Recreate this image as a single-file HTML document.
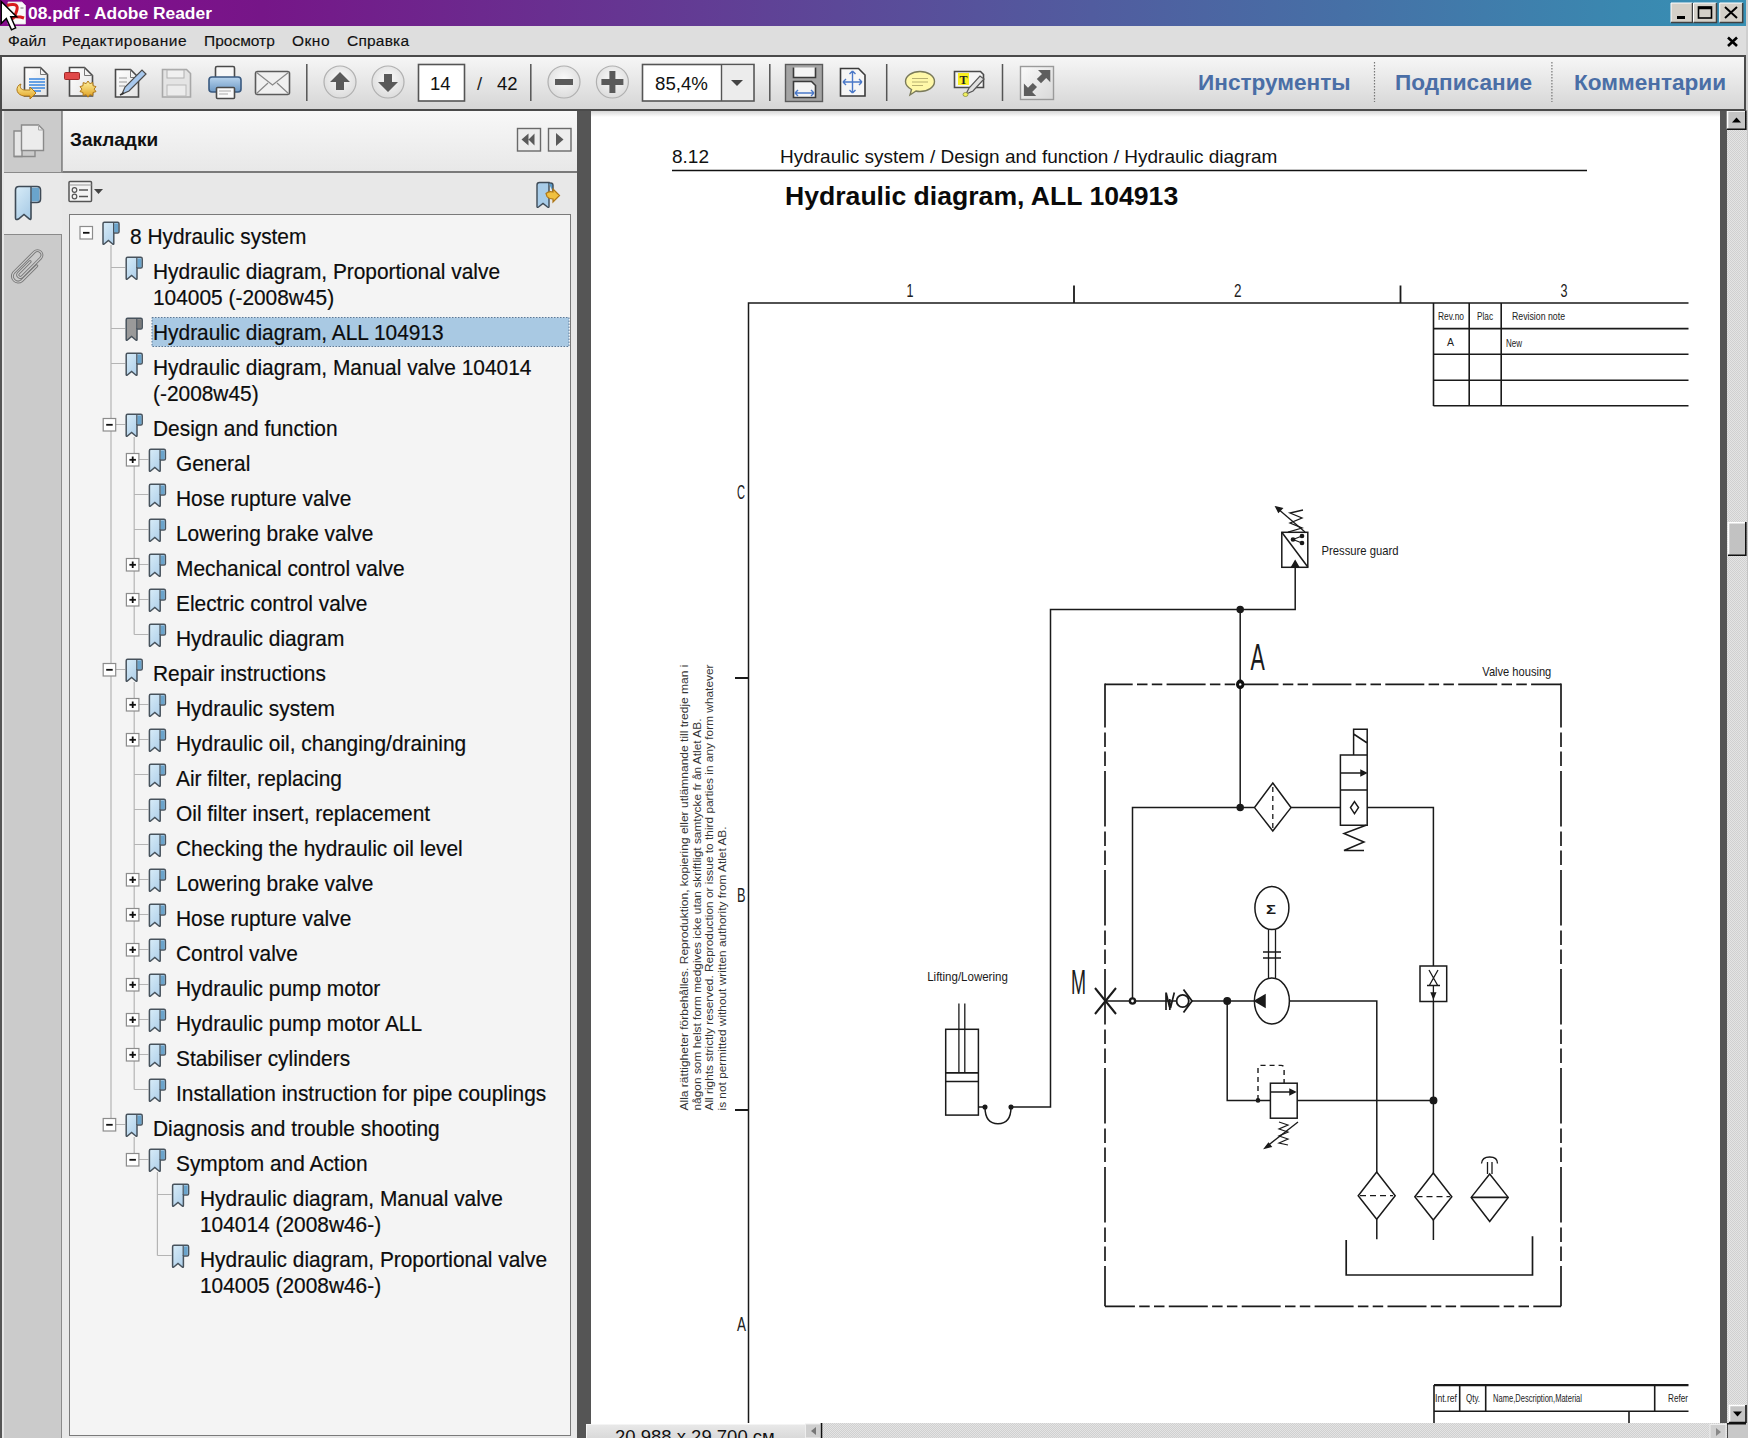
<!DOCTYPE html>
<html><head><meta charset="utf-8">
<style>
*{margin:0;padding:0;box-sizing:border-box}
html,body{width:1748px;height:1438px;overflow:hidden;background:#fff;font-family:"Liberation Sans",sans-serif}
.a{position:absolute}
#title{left:0;top:0;width:1746px;height:26px;background:linear-gradient(90deg,#880a8e 0%,#761688 15%,#5c4898 48%,#4670a6 77%,#3a88b0 93%,#3890b4 100%)}
#title .t{left:28px;top:2px;color:#fff;font-weight:bold;font-size:17.4px;line-height:22px;white-space:nowrap}
#menu{left:0;top:26px;width:1748px;height:29px;background:#dedede}
#menu span{position:absolute;top:6px;font-size:15.5px;line-height:18px;color:#111;white-space:nowrap;-webkit-text-stroke:0.15px #111}
#tb{z-index:3;left:0;top:55px;width:1746px;border-right:2px solid #4a4a4a;height:56px;background:linear-gradient(#f6f6f6,#e6e6e6 50%,#d6d6d6);border-top:2px solid #4a4a4a;border-bottom:2px solid #4a4a4a;border-left:2px solid #4a4a4a}
#strip{left:0;top:110px;width:62px;height:1328px;background:#cbcbcb;border-left:2px solid #555}
#panel{left:62px;top:110px;width:515px;height:1328px;background:#e8e8e8}
#split{left:577px;top:110px;width:14px;height:1328px;background:#555}
#doc{left:591px;top:110px;width:1129px;height:1310px;background:#fff}
#vs{left:1720px;top:110px;width:28px;height:1328px;background:#d9d9d9}
.tbt{white-space:nowrap;line-height:22px;z-index:5}
.tbb{font-size:22.6px;font-weight:bold;color:#4a6ea6}
.hatch{background-color:#e4e4e4;background-image:linear-gradient(45deg,#d0d0d0 25%,transparent 25%,transparent 75%,#d0d0d0 75%),linear-gradient(45deg,#d0d0d0 25%,transparent 25%,transparent 75%,#d0d0d0 75%);background-size:2px 2px;background-position:0 0,1px 1px}
.tree{font-size:21.8px;color:#0c0c0c;white-space:nowrap;line-height:26px;-webkit-text-stroke:0.2px #0c0c0c;transform:scaleX(0.958);transform-origin:0 0}
</style></head><body>
<div id="title" class="a"><div class="a t">08.pdf - Adobe Reader</div></div>
<div id="menu" class="a">
<span style="left:8px">Файл</span><span style="left:62px;letter-spacing:0.5px">Редактирование</span><span style="left:204px">Просмотр</span><span style="left:292px;letter-spacing:0.5px">Окно</span><span style="left:347px;letter-spacing:0.2px">Справка</span>
</div>
<div id="tb" class="a"></div>
<svg class="a" style="left:0;top:0;z-index:4" width="1748" height="112" viewBox="0 0 1748 112">
<defs>
<linearGradient id="gPage" x1="0" y1="0" x2="1" y2="1"><stop offset="0" stop-color="#ffffff"/><stop offset="1" stop-color="#e4e4e4"/></linearGradient>
<linearGradient id="gGold" x1="0" y1="0" x2="0" y2="1"><stop offset="0" stop-color="#fff2a0"/><stop offset="1" stop-color="#e0a020"/></linearGradient>
<linearGradient id="gBlue" x1="0" y1="0" x2="0" y2="1"><stop offset="0" stop-color="#b8d4ee"/><stop offset="1" stop-color="#6c98c4"/></linearGradient>
<radialGradient id="gCirc" cx="0.5" cy="0.4" r="0.6"><stop offset="0" stop-color="#fafafa"/><stop offset="1" stop-color="#dcdcdc"/></radialGradient>
</defs>
<!-- icon1 open -->
<path d="M24.5 67.5h16l7 7v21.5h-23z" fill="url(#gPage)" stroke="#4a4a4a" stroke-width="1.6"/>
<path d="M40.5 67.5v7h7" fill="none" stroke="#777" stroke-width="1"/>
<g stroke="#3a86e0" stroke-width="1.4"><path d="M29 79h16M29 82h16M29 85h16M29 88h16M29 91h12"/></g>
<path d="M19 85c-4 4-2 10 5 11h6v3l6-6-6-6v3h-5c-4 0-6-3-4-6z" fill="url(#gGold)" stroke="#b07818" stroke-width="1"/>
<!-- icon2 create -->
<path d="M69.5 67.5h15l8 8v20.5h-23z" fill="url(#gPage)" stroke="#4a4a4a" stroke-width="1.6"/>
<path d="M84.5 67.5v8h8" fill="none" stroke="#777" stroke-width="1"/>
<rect x="64.5" y="72.5" width="15" height="7" rx="1" fill="#e04848" stroke="#a02828" stroke-width="1"/>
<path d="M88 81l1.8 2.6 3-1 .2 3.1 3 .9-1.9 2.5 1.9 2.5-3 .9-.2 3.1-3-1-1.8 2.6-1.8-2.6-3 1-.2-3.1-3-.9 1.9-2.5-1.9-2.5 3-.9.2-3.1 3 1z" fill="url(#gGold)" stroke="#b07818" stroke-width="1"/>
<!-- icon3 edit -->
<path d="M115.5 69.5h15l8 8v19.5h-23z" fill="url(#gPage)" stroke="#4a4a4a" stroke-width="1.6"/>
<path d="M130.5 69.5v8h8" fill="none" stroke="#777" stroke-width="1"/>
<g stroke="#999" stroke-width="1"><path d="M119 78h8M119 82h8M119 86h6"/></g>
<path d="M122 94l3-7 17-17 4 4-17 17z" fill="#a8c8ec" stroke="#4a4a4a" stroke-width="1.2"/>
<path d="M120 95l4-2" stroke="#333" stroke-width="1.4"/>
<!-- icon4 save disabled -->
<path d="M162.5 69.5h24l4 4v23.5h-28z" fill="#e4e4e4" stroke="#a8a8a8" stroke-width="1.6"/>
<rect x="167" y="70" width="17" height="8" fill="#f0f0f0" stroke="#b0b0b0" stroke-width="1"/>
<rect x="167" y="85" width="19" height="11" fill="#ececec" stroke="#b8b8b8" stroke-width="1"/>
<!-- icon5 print -->
<rect x="215.5" y="66.5" width="19" height="13" rx="1.5" fill="#f8f8f8" stroke="#4a4a4a" stroke-width="1.6"/>
<path d="M212 77h26c2 0 3 1 3 3v9c0 2-1 3-3 3h-26c-2 0-3-1-3-3v-9c0-2 1-3 3-3z" fill="url(#gBlue)" stroke="#3a5a80" stroke-width="1.6"/>
<rect x="216.5" y="87.5" width="18" height="11" rx="1" fill="#fafafa" stroke="#4a4a4a" stroke-width="1.6"/>
<path d="M219 91h12M219 94h9" stroke="#aaa" stroke-width="1"/>
<!-- icon6 mail -->
<rect x="255.5" y="71.5" width="34" height="23" rx="2" fill="#f0f0f0" stroke="#5a5a5a" stroke-width="1.6"/>
<path d="M256 72l16.5 13 16.5-13M256 94l12-11M289 94l-12-11" fill="none" stroke="#888" stroke-width="1.2"/>
<!-- separators -->
<g stroke="#555" stroke-width="1.5"><path d="M306.8 64v37M530.8 64v37M769.8 64v37M886.7 64v37M1002.5 64v37"/></g>
<!-- nav circles -->
<circle cx="340" cy="82" r="16" fill="url(#gCirc)" stroke="#b0b0b0" stroke-width="1.2"/>
<path d="M340 72l-10 10h6v8h8v-8h6z" fill="#5a5a5a"/>
<circle cx="388" cy="82" r="16" fill="url(#gCirc)" stroke="#b0b0b0" stroke-width="1.2"/>
<path d="M388 92l-10-10h6v-8h8v8h6z" fill="#5a5a5a"/>
<rect x="418.5" y="64.5" width="46" height="36.5" fill="#fff" stroke="#555" stroke-width="1.6"/>
<circle cx="564" cy="82" r="16" fill="url(#gCirc)" stroke="#b0b0b0" stroke-width="1.2"/>
<rect x="555" y="79" width="18" height="6" fill="#5a5a5a"/>
<circle cx="612.4" cy="82" r="16" fill="url(#gCirc)" stroke="#b0b0b0" stroke-width="1.2"/>
<path d="M609.4 71h6v8h8v6h-8v8h-6v-8h-8v-6h8z" fill="#5a5a5a"/>
<rect x="642.5" y="64.5" width="111.5" height="36.5" fill="#fff" stroke="#555" stroke-width="1.6"/>
<rect x="722" y="65.5" width="31" height="34.5" fill="#ececec"/>
<path d="M721.5 65v36" stroke="#555" stroke-width="1.4"/>
<path d="M731 80h12l-6 6z" fill="#444"/>
<!-- fit width pressed -->
<rect x="785.5" y="64.5" width="37" height="37" fill="#a4a4a4" stroke="#5a5a5a" stroke-width="1.4"/>
<path d="M793.5 67.5v10h22v-10" fill="#f4f4f4" stroke="#3a3a3a" stroke-width="1.6"/>
<path d="M793.5 97.5v-16h18l4 4v12z" fill="#f4f4f4" stroke="#3a3a3a" stroke-width="1.6"/>
<path d="M795 93h19M795 93l3-3M795 93l3 3M814 93l-3-3M814 93l-3 3" stroke="#4a78c8" stroke-width="1.4" fill="none"/>
<!-- fit page -->
<path d="M840.5 68.5h18l6.5 6.5v21h-24.5z" fill="#f6f6f6" stroke="#3a3a3a" stroke-width="1.6"/>
<path d="M852.5 71v22M843 82h19M852.5 71l-3 3M852.5 71l3 3M852.5 93l-3-3M852.5 93l3-3M843 82l3-3M843 82l3 3M862 82l-3-3M862 82l-3 3" stroke="#4a78c8" stroke-width="1.4" fill="none"/>
<!-- comment -->
<path d="M920 71.5c8 0 14.5 4.5 14.5 10s-6.5 10-14.5 10c-1.5 0-3-.2-4-.5l-6 4 1.5-5.5c-3.5-2-6-4.8-6-8 0-5.5 6.5-10 14.5-10z" fill="#fff8a8" stroke="#7a7a5a" stroke-width="1.4"/>
<path d="M912 78.5h16M912 82h16M912 85.5h11" stroke="#b8b070" stroke-width="1.2"/>
<!-- highlight T -->
<path d="M954.5 71.5h26l3 3v13h-29z" fill="#f4f4f4" stroke="#4a4a4a" stroke-width="1.6"/>
<rect x="958" y="73" width="11" height="12" fill="#f8f020"/>
<text x="963.5" y="83.5" font-family="Liberation Serif" font-weight="bold" font-size="12" text-anchor="middle" fill="#222">T</text>
<path d="M966 94l3-6 11-12 4 3-11 12z" fill="#e0e0e0" stroke="#555" stroke-width="1.2"/>
<ellipse cx="965.5" cy="94.5" rx="2.5" ry="2" fill="#f0f060" stroke="#8a8a40" stroke-width="0.8"/>
<!-- fullscreen -->
<defs><linearGradient id="gFs" x1="0" y1="0" x2="1" y2="1"><stop offset="0" stop-color="#fafafa"/><stop offset="1" stop-color="#d8d8d8"/></linearGradient></defs>
<rect x="1020.5" y="66.5" width="33" height="33" fill="url(#gFs)" stroke="#9a9a9a" stroke-width="1.4"/>
<path d="M1050.3 69.9V82.2L1046.2 78.1 1041 83.3 1036.8 79.1 1042 73.9 1038 69.9Z" fill="#5e5e5e"/>
<path d="M1023.9 95.9V83.6L1028 87.7 1032.8 82.9 1037 87.1 1032.2 91.9 1036.2 95.9Z" fill="#5e5e5e"/>
<!-- dotted separators right -->
<g stroke="#777" stroke-width="1.2" stroke-dasharray="1.5 1.5"><path d="M1374.5 62v40M1551.9 62v40"/></g>
<!-- window buttons -->
<g>
<rect x="1671" y="3" width="21.5" height="19.5" fill="#d4d0c8"/>
<path d="M1671 22.5v-19.5h21.5" stroke="#fff" stroke-width="1" fill="none"/>
<path d="M1671 22.5h21.5v-19.5" stroke="#404040" stroke-width="1.5" fill="none"/>
<rect x="1677" y="16" width="8" height="3" fill="#000"/>
<rect x="1693.5" y="3" width="23" height="19.5" fill="#d4d0c8"/>
<path d="M1693.5 22.5v-19.5h23" stroke="#fff" stroke-width="1" fill="none"/>
<path d="M1693.5 22.5h23v-19.5" stroke="#404040" stroke-width="1.5" fill="none"/>
<rect x="1698.5" y="7" width="13" height="11" fill="none" stroke="#000" stroke-width="1.6"/>
<path d="M1698.5 8h13" stroke="#000" stroke-width="2.5"/>
<rect x="1719.7" y="3" width="23" height="19.5" fill="#d4d0c8"/>
<path d="M1719.7 22.5v-19.5h23" stroke="#fff" stroke-width="1" fill="none"/>
<path d="M1719.7 22.5h23v-19.5" stroke="#404040" stroke-width="1.5" fill="none"/>
<path d="M1725 7l12 11M1737 7l-12 11" stroke="#000" stroke-width="2"/>
</g>
<path d="M1728 37.5l9 8.5M1737 37.5l-9 8.5" stroke="#000" stroke-width="2.6"/>
</svg>
<div class="a tbt" style="left:430px;top:73.3px;font-size:18.5px;color:#111">14</div>
<div class="a tbt" style="left:477px;top:73.3px;font-size:18.5px;color:#222">/</div>
<div class="a tbt" style="left:497px;top:73.3px;font-size:18.5px;color:#111">42</div>
<div class="a tbt" style="left:655px;top:73.3px;font-size:18.7px;color:#111">85,4%</div>
<div class="a tbt tbb" style="left:1198px;top:71.5px">Инструменты</div>
<div class="a tbt tbb" style="left:1395px;top:71.5px">Подписание</div>
<div class="a tbt tbb" style="left:1574px;top:71.5px">Комментарии</div>

<div id="strip" class="a"></div>
<div class="a" style="left:2px;top:172px;width:62px;height:63px;background:#e9e9e9;border-top:1.5px solid #8a8a8a;border-bottom:1.5px solid #8a8a8a"></div>
<div id="panel" class="a"></div>
<div class="a" style="left:61px;top:110px;width:1.3px;height:62px;background:#8a8a8a"></div><div class="a" style="left:61px;top:235px;width:1.3px;height:1203px;background:#8a8a8a"></div><div class="a" style="left:2px;top:110px;width:1.5px;height:1328px;background:#e6e6e6"></div>
<div class="a" style="left:62px;top:110px;width:515px;height:63.4px;background:linear-gradient(#f8f8f8,#e8e8e8);border-left:1.5px solid #9a9a9a;border-bottom:2px solid #7a7a7a"></div>
<div class="a" style="left:70px;top:129px;font-size:19px;font-weight:bold;color:#111;line-height:22px">Закладки</div>
<div class="a" style="left:69px;top:214px;width:502px;height:1222px;background:#f4f4f4;border:1.5px solid #7a7a7a"></div>
<svg class="a" style="left:0;top:100px" width="600" height="140" viewBox="0 100 600 140">
<!-- pages icon -->
<path d="M14 131h8v25.5h-8z" fill="#e6e6e6" stroke="#8a8a8a" stroke-width="1.4"/><path d="M14 156.5h21v-6" fill="none" stroke="#8a8a8a" stroke-width="1.4"/>
<path d="M21.5 125h17l5 5v20.5h-22z" fill="#ececec" stroke="#8a8a8a" stroke-width="1.4"/><path d="M38.5 125v5h5" fill="none" stroke="#aaa" stroke-width="1"/>
<!-- bookmark tab icon -->
<path d="M15.5 190Q15.5 186.5 19 186.5H37Q40.5 186.5 40.5 190V199Q40.5 202.5 37 202.5H31V218Q31 220 29.5 219L24 214.5 18.5 219Q15.5 220.5 15.5 218Z" fill="url(#bmB2)" stroke="#3e4a56" stroke-width="1.6"/>
<rect x="31.5" y="188" width="7.5" height="13" fill="#6aa4cc"/>
<path d="M31 187v15.5" stroke="#3e4a56" stroke-width="1.4"/>
<!-- buttons -->
<rect x="517.5" y="128.5" width="23" height="22.5" fill="#ededed" stroke="#6a6a6a" stroke-width="1.4"/>
<path d="M521.5 139.5l7-6v12zM528.5 139.5l6-6v12z" fill="#5a5a5a"/>
<rect x="548.5" y="128.5" width="22.5" height="22.5" fill="#ededed" stroke="#6a6a6a" stroke-width="1.4"/>
<path d="M556 133l7.5 6.5-7.5 6.5z" fill="#5a5a5a"/>
<!-- options icon -->
<rect x="69" y="181.5" width="22.5" height="20" rx="1" fill="#f4f4f4" stroke="#555" stroke-width="1.5"/>
<path d="M69.5 185h22" stroke="#999" stroke-width="1"/>
<circle cx="74.5" cy="190" r="2.3" fill="none" stroke="#555" stroke-width="1.2"/>
<circle cx="74.5" cy="196.5" r="2.3" fill="none" stroke="#555" stroke-width="1.2"/>
<path d="M79 190h9M79 196.5h9" stroke="#555" stroke-width="1.6"/>
<path d="M94 189h9l-4.5 5z" fill="#444"/>
<!-- bookmark-arrow icon -->
<path d="M537 185Q537 182.5 539.5 182.5H549V206.5Q549 208 547.5 207L543 203.5 538.5 207Q537 208 537 206.5Z" fill="#a8cce8" stroke="#3e4a56" stroke-width="1.4"/>
<path d="M548.5 183Q553 182.5 553 185V192" fill="#5a9ac8" stroke="#3e4a56" stroke-width="1.4"/>
<path d="M546 193.5c2-2 5-2 7-1.5v-3l6.5 6.5-6.5 6.5v-3c-2 0-4.5-.5-6-2.5z" fill="#f0c040" stroke="#b07818" stroke-width="1.2"/>
<defs><linearGradient id="bmB2" x1="0" y1="0" x2="1" y2="1"><stop offset="0" stop-color="#d8ecf8"/><stop offset="1" stop-color="#98c0e0"/></linearGradient></defs>
</svg>
<svg class="a" style="left:0;top:235px" width="62" height="70" viewBox="0 235 62 70">
<g transform="translate(27.8,265.8) rotate(-45) scale(0.9)" fill="none">
<path d="M5 -1.5H-13A2.8 2.8 0 0 0 -13 4.1H16A4.9 4.9 0 0 0 16 -5.7H-16.5A6.4 6.4 0 0 0 -16.5 7H7" stroke="#7c7c7c" stroke-width="3.4" stroke-linecap="round"/>
<path d="M5 -1.5H-13A2.8 2.8 0 0 0 -13 4.1H16A4.9 4.9 0 0 0 16 -5.7H-16.5A6.4 6.4 0 0 0 -16.5 7H7" stroke="#d2d2d2" stroke-width="1.2" stroke-linecap="round"/>
</g>
</svg>
<svg class="a" style="left:0;top:0" width="600" height="1438" viewBox="0 0 600 1438"><defs><linearGradient id="bmB" x1="0" y1="0" x2="1" y2="1"><stop offset="0" stop-color="#d8ecf8"/><stop offset="1" stop-color="#a4c8e6"/></linearGradient></defs><path d="M111.0 245.0V1124.5M111.0 267.5H125.2M111.0 328.5H125.2M111.0 363.5H125.2M111.0 424.5H125.2M134.2 437.0V634.5M134.2 459.5H148.4M134.2 494.5H148.4M134.2 529.5H148.4M134.2 564.5H148.4M134.2 599.5H148.4M134.2 634.5H148.4M111.0 669.5H125.2M134.2 682.0V1089.5M134.2 704.5H148.4M134.2 739.5H148.4M134.2 774.5H148.4M134.2 809.5H148.4M134.2 844.5H148.4M134.2 879.5H148.4M134.2 914.5H148.4M134.2 949.5H148.4M134.2 984.5H148.4M134.2 1019.5H148.4M134.2 1054.5H148.4M134.2 1089.5H148.4M111.0 1124.5H125.2M134.2 1137.0V1159.5M134.2 1159.5H148.4M157.4 1172.0V1255.5M157.4 1194.5H171.6M157.4 1255.5H171.6" stroke="#b4b4b4" stroke-width="1.2" fill="none"/><rect x="80.0" y="226.5" width="12.5" height="12.5" fill="#fff" stroke="#8c8c8c" stroke-width="1.2"/><path d="M83.0 232.8h6.5" stroke="#111" stroke-width="1.8"/><g transform="translate(102.0,221.5)"><path d="M1 2.2Q1 .8 2.4 .8H15.6Q17 .8 17 2.2V10.2Q17 11.6 15.6 11.6H11.8V22Q11.8 23.4 10.6 22.5L6.4 19 2.2 22.5Q1 23.4 1 22Z" fill="url(#bmB)" stroke="#47525c" stroke-width="1.5"/><rect x="12.2" y="2" width="3.8" height="8.6" fill="#6aa4cc"/><path d="M11.6 1V11.6" stroke="#47525c" stroke-width="1.2"/></g><g transform="translate(125.2,256.5)"><path d="M1 2.2Q1 .8 2.4 .8H15.6Q17 .8 17 2.2V10.2Q17 11.6 15.6 11.6H11.8V22Q11.8 23.4 10.6 22.5L6.4 19 2.2 22.5Q1 23.4 1 22Z" fill="url(#bmB)" stroke="#47525c" stroke-width="1.5"/><rect x="12.2" y="2" width="3.8" height="8.6" fill="#6aa4cc"/><path d="M11.6 1V11.6" stroke="#47525c" stroke-width="1.2"/></g><rect x="152" y="317.5" width="417" height="29" fill="#a9c9e3" stroke="#5c7896" stroke-width="1" stroke-dasharray="1.5 1.5"/><g transform="translate(125.2,317.5)"><path d="M1 2.2Q1 .8 2.4 .8H15.6Q17 .8 17 2.2V10.2Q17 11.6 15.6 11.6H11.8V22Q11.8 23.4 10.6 22.5L6.4 19 2.2 22.5Q1 23.4 1 22Z" fill="#9a9a9a" stroke="#47525c" stroke-width="1.5"/><rect x="12.2" y="2" width="3.8" height="8.6" fill="#7a7a7a"/><path d="M11.6 1V11.6" stroke="#47525c" stroke-width="1.2"/></g><g transform="translate(125.2,352.5)"><path d="M1 2.2Q1 .8 2.4 .8H15.6Q17 .8 17 2.2V10.2Q17 11.6 15.6 11.6H11.8V22Q11.8 23.4 10.6 22.5L6.4 19 2.2 22.5Q1 23.4 1 22Z" fill="url(#bmB)" stroke="#47525c" stroke-width="1.5"/><rect x="12.2" y="2" width="3.8" height="8.6" fill="#6aa4cc"/><path d="M11.6 1V11.6" stroke="#47525c" stroke-width="1.2"/></g><rect x="103.2" y="418.5" width="12.5" height="12.5" fill="#fff" stroke="#8c8c8c" stroke-width="1.2"/><path d="M106.2 424.8h6.5" stroke="#111" stroke-width="1.8"/><g transform="translate(125.2,413.5)"><path d="M1 2.2Q1 .8 2.4 .8H15.6Q17 .8 17 2.2V10.2Q17 11.6 15.6 11.6H11.8V22Q11.8 23.4 10.6 22.5L6.4 19 2.2 22.5Q1 23.4 1 22Z" fill="url(#bmB)" stroke="#47525c" stroke-width="1.5"/><rect x="12.2" y="2" width="3.8" height="8.6" fill="#6aa4cc"/><path d="M11.6 1V11.6" stroke="#47525c" stroke-width="1.2"/></g><rect x="126.4" y="453.5" width="12.5" height="12.5" fill="#fff" stroke="#8c8c8c" stroke-width="1.2"/><path d="M129.4 459.8h6.5" stroke="#111" stroke-width="1.8"/><path d="M132.7 456.5v6.5" stroke="#111" stroke-width="1.8"/><g transform="translate(148.4,448.5)"><path d="M1 2.2Q1 .8 2.4 .8H15.6Q17 .8 17 2.2V10.2Q17 11.6 15.6 11.6H11.8V22Q11.8 23.4 10.6 22.5L6.4 19 2.2 22.5Q1 23.4 1 22Z" fill="url(#bmB)" stroke="#47525c" stroke-width="1.5"/><rect x="12.2" y="2" width="3.8" height="8.6" fill="#6aa4cc"/><path d="M11.6 1V11.6" stroke="#47525c" stroke-width="1.2"/></g><g transform="translate(148.4,483.5)"><path d="M1 2.2Q1 .8 2.4 .8H15.6Q17 .8 17 2.2V10.2Q17 11.6 15.6 11.6H11.8V22Q11.8 23.4 10.6 22.5L6.4 19 2.2 22.5Q1 23.4 1 22Z" fill="url(#bmB)" stroke="#47525c" stroke-width="1.5"/><rect x="12.2" y="2" width="3.8" height="8.6" fill="#6aa4cc"/><path d="M11.6 1V11.6" stroke="#47525c" stroke-width="1.2"/></g><g transform="translate(148.4,518.5)"><path d="M1 2.2Q1 .8 2.4 .8H15.6Q17 .8 17 2.2V10.2Q17 11.6 15.6 11.6H11.8V22Q11.8 23.4 10.6 22.5L6.4 19 2.2 22.5Q1 23.4 1 22Z" fill="url(#bmB)" stroke="#47525c" stroke-width="1.5"/><rect x="12.2" y="2" width="3.8" height="8.6" fill="#6aa4cc"/><path d="M11.6 1V11.6" stroke="#47525c" stroke-width="1.2"/></g><rect x="126.4" y="558.5" width="12.5" height="12.5" fill="#fff" stroke="#8c8c8c" stroke-width="1.2"/><path d="M129.4 564.8h6.5" stroke="#111" stroke-width="1.8"/><path d="M132.7 561.5v6.5" stroke="#111" stroke-width="1.8"/><g transform="translate(148.4,553.5)"><path d="M1 2.2Q1 .8 2.4 .8H15.6Q17 .8 17 2.2V10.2Q17 11.6 15.6 11.6H11.8V22Q11.8 23.4 10.6 22.5L6.4 19 2.2 22.5Q1 23.4 1 22Z" fill="url(#bmB)" stroke="#47525c" stroke-width="1.5"/><rect x="12.2" y="2" width="3.8" height="8.6" fill="#6aa4cc"/><path d="M11.6 1V11.6" stroke="#47525c" stroke-width="1.2"/></g><rect x="126.4" y="593.5" width="12.5" height="12.5" fill="#fff" stroke="#8c8c8c" stroke-width="1.2"/><path d="M129.4 599.8h6.5" stroke="#111" stroke-width="1.8"/><path d="M132.7 596.5v6.5" stroke="#111" stroke-width="1.8"/><g transform="translate(148.4,588.5)"><path d="M1 2.2Q1 .8 2.4 .8H15.6Q17 .8 17 2.2V10.2Q17 11.6 15.6 11.6H11.8V22Q11.8 23.4 10.6 22.5L6.4 19 2.2 22.5Q1 23.4 1 22Z" fill="url(#bmB)" stroke="#47525c" stroke-width="1.5"/><rect x="12.2" y="2" width="3.8" height="8.6" fill="#6aa4cc"/><path d="M11.6 1V11.6" stroke="#47525c" stroke-width="1.2"/></g><g transform="translate(148.4,623.5)"><path d="M1 2.2Q1 .8 2.4 .8H15.6Q17 .8 17 2.2V10.2Q17 11.6 15.6 11.6H11.8V22Q11.8 23.4 10.6 22.5L6.4 19 2.2 22.5Q1 23.4 1 22Z" fill="url(#bmB)" stroke="#47525c" stroke-width="1.5"/><rect x="12.2" y="2" width="3.8" height="8.6" fill="#6aa4cc"/><path d="M11.6 1V11.6" stroke="#47525c" stroke-width="1.2"/></g><rect x="103.2" y="663.5" width="12.5" height="12.5" fill="#fff" stroke="#8c8c8c" stroke-width="1.2"/><path d="M106.2 669.8h6.5" stroke="#111" stroke-width="1.8"/><g transform="translate(125.2,658.5)"><path d="M1 2.2Q1 .8 2.4 .8H15.6Q17 .8 17 2.2V10.2Q17 11.6 15.6 11.6H11.8V22Q11.8 23.4 10.6 22.5L6.4 19 2.2 22.5Q1 23.4 1 22Z" fill="url(#bmB)" stroke="#47525c" stroke-width="1.5"/><rect x="12.2" y="2" width="3.8" height="8.6" fill="#6aa4cc"/><path d="M11.6 1V11.6" stroke="#47525c" stroke-width="1.2"/></g><rect x="126.4" y="698.5" width="12.5" height="12.5" fill="#fff" stroke="#8c8c8c" stroke-width="1.2"/><path d="M129.4 704.8h6.5" stroke="#111" stroke-width="1.8"/><path d="M132.7 701.5v6.5" stroke="#111" stroke-width="1.8"/><g transform="translate(148.4,693.5)"><path d="M1 2.2Q1 .8 2.4 .8H15.6Q17 .8 17 2.2V10.2Q17 11.6 15.6 11.6H11.8V22Q11.8 23.4 10.6 22.5L6.4 19 2.2 22.5Q1 23.4 1 22Z" fill="url(#bmB)" stroke="#47525c" stroke-width="1.5"/><rect x="12.2" y="2" width="3.8" height="8.6" fill="#6aa4cc"/><path d="M11.6 1V11.6" stroke="#47525c" stroke-width="1.2"/></g><rect x="126.4" y="733.5" width="12.5" height="12.5" fill="#fff" stroke="#8c8c8c" stroke-width="1.2"/><path d="M129.4 739.8h6.5" stroke="#111" stroke-width="1.8"/><path d="M132.7 736.5v6.5" stroke="#111" stroke-width="1.8"/><g transform="translate(148.4,728.5)"><path d="M1 2.2Q1 .8 2.4 .8H15.6Q17 .8 17 2.2V10.2Q17 11.6 15.6 11.6H11.8V22Q11.8 23.4 10.6 22.5L6.4 19 2.2 22.5Q1 23.4 1 22Z" fill="url(#bmB)" stroke="#47525c" stroke-width="1.5"/><rect x="12.2" y="2" width="3.8" height="8.6" fill="#6aa4cc"/><path d="M11.6 1V11.6" stroke="#47525c" stroke-width="1.2"/></g><g transform="translate(148.4,763.5)"><path d="M1 2.2Q1 .8 2.4 .8H15.6Q17 .8 17 2.2V10.2Q17 11.6 15.6 11.6H11.8V22Q11.8 23.4 10.6 22.5L6.4 19 2.2 22.5Q1 23.4 1 22Z" fill="url(#bmB)" stroke="#47525c" stroke-width="1.5"/><rect x="12.2" y="2" width="3.8" height="8.6" fill="#6aa4cc"/><path d="M11.6 1V11.6" stroke="#47525c" stroke-width="1.2"/></g><g transform="translate(148.4,798.5)"><path d="M1 2.2Q1 .8 2.4 .8H15.6Q17 .8 17 2.2V10.2Q17 11.6 15.6 11.6H11.8V22Q11.8 23.4 10.6 22.5L6.4 19 2.2 22.5Q1 23.4 1 22Z" fill="url(#bmB)" stroke="#47525c" stroke-width="1.5"/><rect x="12.2" y="2" width="3.8" height="8.6" fill="#6aa4cc"/><path d="M11.6 1V11.6" stroke="#47525c" stroke-width="1.2"/></g><g transform="translate(148.4,833.5)"><path d="M1 2.2Q1 .8 2.4 .8H15.6Q17 .8 17 2.2V10.2Q17 11.6 15.6 11.6H11.8V22Q11.8 23.4 10.6 22.5L6.4 19 2.2 22.5Q1 23.4 1 22Z" fill="url(#bmB)" stroke="#47525c" stroke-width="1.5"/><rect x="12.2" y="2" width="3.8" height="8.6" fill="#6aa4cc"/><path d="M11.6 1V11.6" stroke="#47525c" stroke-width="1.2"/></g><rect x="126.4" y="873.5" width="12.5" height="12.5" fill="#fff" stroke="#8c8c8c" stroke-width="1.2"/><path d="M129.4 879.8h6.5" stroke="#111" stroke-width="1.8"/><path d="M132.7 876.5v6.5" stroke="#111" stroke-width="1.8"/><g transform="translate(148.4,868.5)"><path d="M1 2.2Q1 .8 2.4 .8H15.6Q17 .8 17 2.2V10.2Q17 11.6 15.6 11.6H11.8V22Q11.8 23.4 10.6 22.5L6.4 19 2.2 22.5Q1 23.4 1 22Z" fill="url(#bmB)" stroke="#47525c" stroke-width="1.5"/><rect x="12.2" y="2" width="3.8" height="8.6" fill="#6aa4cc"/><path d="M11.6 1V11.6" stroke="#47525c" stroke-width="1.2"/></g><rect x="126.4" y="908.5" width="12.5" height="12.5" fill="#fff" stroke="#8c8c8c" stroke-width="1.2"/><path d="M129.4 914.8h6.5" stroke="#111" stroke-width="1.8"/><path d="M132.7 911.5v6.5" stroke="#111" stroke-width="1.8"/><g transform="translate(148.4,903.5)"><path d="M1 2.2Q1 .8 2.4 .8H15.6Q17 .8 17 2.2V10.2Q17 11.6 15.6 11.6H11.8V22Q11.8 23.4 10.6 22.5L6.4 19 2.2 22.5Q1 23.4 1 22Z" fill="url(#bmB)" stroke="#47525c" stroke-width="1.5"/><rect x="12.2" y="2" width="3.8" height="8.6" fill="#6aa4cc"/><path d="M11.6 1V11.6" stroke="#47525c" stroke-width="1.2"/></g><rect x="126.4" y="943.5" width="12.5" height="12.5" fill="#fff" stroke="#8c8c8c" stroke-width="1.2"/><path d="M129.4 949.8h6.5" stroke="#111" stroke-width="1.8"/><path d="M132.7 946.5v6.5" stroke="#111" stroke-width="1.8"/><g transform="translate(148.4,938.5)"><path d="M1 2.2Q1 .8 2.4 .8H15.6Q17 .8 17 2.2V10.2Q17 11.6 15.6 11.6H11.8V22Q11.8 23.4 10.6 22.5L6.4 19 2.2 22.5Q1 23.4 1 22Z" fill="url(#bmB)" stroke="#47525c" stroke-width="1.5"/><rect x="12.2" y="2" width="3.8" height="8.6" fill="#6aa4cc"/><path d="M11.6 1V11.6" stroke="#47525c" stroke-width="1.2"/></g><rect x="126.4" y="978.5" width="12.5" height="12.5" fill="#fff" stroke="#8c8c8c" stroke-width="1.2"/><path d="M129.4 984.8h6.5" stroke="#111" stroke-width="1.8"/><path d="M132.7 981.5v6.5" stroke="#111" stroke-width="1.8"/><g transform="translate(148.4,973.5)"><path d="M1 2.2Q1 .8 2.4 .8H15.6Q17 .8 17 2.2V10.2Q17 11.6 15.6 11.6H11.8V22Q11.8 23.4 10.6 22.5L6.4 19 2.2 22.5Q1 23.4 1 22Z" fill="url(#bmB)" stroke="#47525c" stroke-width="1.5"/><rect x="12.2" y="2" width="3.8" height="8.6" fill="#6aa4cc"/><path d="M11.6 1V11.6" stroke="#47525c" stroke-width="1.2"/></g><rect x="126.4" y="1013.5" width="12.5" height="12.5" fill="#fff" stroke="#8c8c8c" stroke-width="1.2"/><path d="M129.4 1019.8h6.5" stroke="#111" stroke-width="1.8"/><path d="M132.7 1016.5v6.5" stroke="#111" stroke-width="1.8"/><g transform="translate(148.4,1008.5)"><path d="M1 2.2Q1 .8 2.4 .8H15.6Q17 .8 17 2.2V10.2Q17 11.6 15.6 11.6H11.8V22Q11.8 23.4 10.6 22.5L6.4 19 2.2 22.5Q1 23.4 1 22Z" fill="url(#bmB)" stroke="#47525c" stroke-width="1.5"/><rect x="12.2" y="2" width="3.8" height="8.6" fill="#6aa4cc"/><path d="M11.6 1V11.6" stroke="#47525c" stroke-width="1.2"/></g><rect x="126.4" y="1048.5" width="12.5" height="12.5" fill="#fff" stroke="#8c8c8c" stroke-width="1.2"/><path d="M129.4 1054.8h6.5" stroke="#111" stroke-width="1.8"/><path d="M132.7 1051.5v6.5" stroke="#111" stroke-width="1.8"/><g transform="translate(148.4,1043.5)"><path d="M1 2.2Q1 .8 2.4 .8H15.6Q17 .8 17 2.2V10.2Q17 11.6 15.6 11.6H11.8V22Q11.8 23.4 10.6 22.5L6.4 19 2.2 22.5Q1 23.4 1 22Z" fill="url(#bmB)" stroke="#47525c" stroke-width="1.5"/><rect x="12.2" y="2" width="3.8" height="8.6" fill="#6aa4cc"/><path d="M11.6 1V11.6" stroke="#47525c" stroke-width="1.2"/></g><g transform="translate(148.4,1078.5)"><path d="M1 2.2Q1 .8 2.4 .8H15.6Q17 .8 17 2.2V10.2Q17 11.6 15.6 11.6H11.8V22Q11.8 23.4 10.6 22.5L6.4 19 2.2 22.5Q1 23.4 1 22Z" fill="url(#bmB)" stroke="#47525c" stroke-width="1.5"/><rect x="12.2" y="2" width="3.8" height="8.6" fill="#6aa4cc"/><path d="M11.6 1V11.6" stroke="#47525c" stroke-width="1.2"/></g><rect x="103.2" y="1118.5" width="12.5" height="12.5" fill="#fff" stroke="#8c8c8c" stroke-width="1.2"/><path d="M106.2 1124.8h6.5" stroke="#111" stroke-width="1.8"/><g transform="translate(125.2,1113.5)"><path d="M1 2.2Q1 .8 2.4 .8H15.6Q17 .8 17 2.2V10.2Q17 11.6 15.6 11.6H11.8V22Q11.8 23.4 10.6 22.5L6.4 19 2.2 22.5Q1 23.4 1 22Z" fill="url(#bmB)" stroke="#47525c" stroke-width="1.5"/><rect x="12.2" y="2" width="3.8" height="8.6" fill="#6aa4cc"/><path d="M11.6 1V11.6" stroke="#47525c" stroke-width="1.2"/></g><rect x="126.4" y="1153.5" width="12.5" height="12.5" fill="#fff" stroke="#8c8c8c" stroke-width="1.2"/><path d="M129.4 1159.8h6.5" stroke="#111" stroke-width="1.8"/><g transform="translate(148.4,1148.5)"><path d="M1 2.2Q1 .8 2.4 .8H15.6Q17 .8 17 2.2V10.2Q17 11.6 15.6 11.6H11.8V22Q11.8 23.4 10.6 22.5L6.4 19 2.2 22.5Q1 23.4 1 22Z" fill="url(#bmB)" stroke="#47525c" stroke-width="1.5"/><rect x="12.2" y="2" width="3.8" height="8.6" fill="#6aa4cc"/><path d="M11.6 1V11.6" stroke="#47525c" stroke-width="1.2"/></g><g transform="translate(171.6,1183.5)"><path d="M1 2.2Q1 .8 2.4 .8H15.6Q17 .8 17 2.2V10.2Q17 11.6 15.6 11.6H11.8V22Q11.8 23.4 10.6 22.5L6.4 19 2.2 22.5Q1 23.4 1 22Z" fill="url(#bmB)" stroke="#47525c" stroke-width="1.5"/><rect x="12.2" y="2" width="3.8" height="8.6" fill="#6aa4cc"/><path d="M11.6 1V11.6" stroke="#47525c" stroke-width="1.2"/></g><g transform="translate(171.6,1244.5)"><path d="M1 2.2Q1 .8 2.4 .8H15.6Q17 .8 17 2.2V10.2Q17 11.6 15.6 11.6H11.8V22Q11.8 23.4 10.6 22.5L6.4 19 2.2 22.5Q1 23.4 1 22Z" fill="url(#bmB)" stroke="#47525c" stroke-width="1.5"/><rect x="12.2" y="2" width="3.8" height="8.6" fill="#6aa4cc"/><path d="M11.6 1V11.6" stroke="#47525c" stroke-width="1.2"/></g></svg>
<div class="a tree" style="left:130.0px;top:223.95px">8 Hydraulic system</div>
<div class="a tree" style="left:153.2px;top:258.95px">Hydraulic diagram, Proportional valve<br>104005 (-2008w45)</div>
<div class="a tree" style="left:153.2px;top:319.95px">Hydraulic diagram, ALL 104913</div>
<div class="a tree" style="left:153.2px;top:354.95px">Hydraulic diagram, Manual valve 104014<br>(-2008w45)</div>
<div class="a tree" style="left:153.2px;top:415.95px">Design and function</div>
<div class="a tree" style="left:176.4px;top:450.95px">General</div>
<div class="a tree" style="left:176.4px;top:485.95px">Hose rupture valve</div>
<div class="a tree" style="left:176.4px;top:520.95px">Lowering brake valve</div>
<div class="a tree" style="left:176.4px;top:555.95px">Mechanical control valve</div>
<div class="a tree" style="left:176.4px;top:590.95px">Electric control valve</div>
<div class="a tree" style="left:176.4px;top:625.95px">Hydraulic diagram</div>
<div class="a tree" style="left:153.2px;top:660.95px">Repair instructions</div>
<div class="a tree" style="left:176.4px;top:695.95px">Hydraulic system</div>
<div class="a tree" style="left:176.4px;top:730.95px">Hydraulic oil, changing/draining</div>
<div class="a tree" style="left:176.4px;top:765.95px">Air filter, replacing</div>
<div class="a tree" style="left:176.4px;top:800.95px">Oil filter insert, replacement</div>
<div class="a tree" style="left:176.4px;top:835.95px">Checking the hydraulic oil level</div>
<div class="a tree" style="left:176.4px;top:870.95px">Lowering brake valve</div>
<div class="a tree" style="left:176.4px;top:905.95px">Hose rupture valve</div>
<div class="a tree" style="left:176.4px;top:940.95px">Control valve</div>
<div class="a tree" style="left:176.4px;top:975.95px">Hydraulic pump motor</div>
<div class="a tree" style="left:176.4px;top:1010.95px">Hydraulic pump motor ALL</div>
<div class="a tree" style="left:176.4px;top:1045.95px">Stabiliser cylinders</div>
<div class="a tree" style="left:176.4px;top:1080.95px">Installation instruction for pipe couplings</div>
<div class="a tree" style="left:153.2px;top:1115.95px">Diagnosis and trouble shooting</div>
<div class="a tree" style="left:176.4px;top:1150.95px">Symptom and Action</div>
<div class="a tree" style="left:199.6px;top:1185.95px">Hydraulic diagram, Manual valve<br>104014 (2008w46-)</div>
<div class="a tree" style="left:199.6px;top:1246.95px">Hydraulic diagram, Proportional valve<br>104005 (2008w46-)</div>
<div id="split" class="a"></div>
<div id="doc" class="a"></div>
<svg class="a" style="left:591px;top:110px" width="1129" height="1313" viewBox="591 110 1129 1313" font-family="Liberation Sans">
<rect x="591" y="110" width="1129" height="1313" fill="#fff"/>
<defs><linearGradient id="dsh" x1="0" y1="0" x2="0" y2="1"><stop offset="0" stop-color="#d8d8d8"/><stop offset="1" stop-color="#fff"/></linearGradient></defs><rect x="591" y="111" width="1129" height="6" fill="url(#dsh)"/>
<text x="672" y="163" font-size="19" fill="#111">8.12</text>
<text x="780" y="163" font-size="19" fill="#111">Hydraulic system / Design and function / Hydraulic diagram</text>
<path d="M672 170.5H1587" stroke="#111" stroke-width="1.6"/>
<text x="785" y="205.2" font-size="26.6" font-weight="bold" fill="#0a0a0a">Hydraulic diagram, ALL 104913</text>
<g fill="none" stroke="#1a1a1a" stroke-width="1.5">
<!-- frame -->
<path d="M748.5 1423V303H1688.5"/>
<path d="M1074 285.5V303M1400.5 285.5V303M735 678H748M735 1110H748" stroke-width="1.8"/>
<!-- revision table -->
<path d="M1433.5 303V406M1469.2 303V406M1501.2 303V406M1433.5 328.6H1688.5M1433.5 354.2H1688.5M1433.5 380.2H1688.5M1433.5 405.8H1688.5" stroke-width="1.6"/>
<!-- bottom table -->
<path d="M1434 1385.2H1688.5" stroke-width="2.2"/>
<path d="M1434 1411.3H1688.5M1434 1385V1423M1459.7 1385V1411M1485.7 1385V1411M1654.7 1385V1411M1629 1411V1423" stroke-width="1.6"/>
</g>
<g font-size="18" fill="#222">
<text x="906.5" y="297.3" textLength="7" lengthAdjust="spacingAndGlyphs">1</text>
<text x="1234" y="297.3" textLength="7.5" lengthAdjust="spacingAndGlyphs">2</text>
<text x="1560.5" y="297" textLength="7" lengthAdjust="spacingAndGlyphs">3</text>
<text x="737" y="498.8" font-size="20.4" textLength="8" lengthAdjust="spacingAndGlyphs">C</text>
<text x="737" y="901.5" font-size="20.4" textLength="8.5" lengthAdjust="spacingAndGlyphs">B</text>
<text x="737" y="1331.3" font-size="20.4" textLength="9" lengthAdjust="spacingAndGlyphs">A</text>
</g>
<g font-size="10" fill="#222">
<text x="1438" y="320" textLength="26" lengthAdjust="spacingAndGlyphs">Rev.no</text>
<text x="1477" y="320" textLength="16" lengthAdjust="spacingAndGlyphs">Plac</text>
<text x="1512" y="320" textLength="53" lengthAdjust="spacingAndGlyphs">Revision note</text>
<text x="1447" y="346" textLength="7" lengthAdjust="spacingAndGlyphs">A</text>
<text x="1506" y="346.5" textLength="16" lengthAdjust="spacingAndGlyphs">New</text>
<text x="1435" y="1402" textLength="22" lengthAdjust="spacingAndGlyphs">Int.ref</text>
<text x="1466" y="1402" textLength="14" lengthAdjust="spacingAndGlyphs">Qty.</text>
<text x="1493" y="1402" textLength="89" lengthAdjust="spacingAndGlyphs">Name,Description,Material</text>
<text x="1668" y="1402" textLength="20" lengthAdjust="spacingAndGlyphs">Refer</text>
</g>
<!-- vertical copyright text -->
<g font-size="10.5" fill="#333">
<text transform="translate(688,1110.5) rotate(-90)" textLength="446" lengthAdjust="spacingAndGlyphs">Alla rättigheter förbehålles. Reproduktion, kopiering eller utlämnande till tredje man i</text>
<text transform="translate(700.7,1110.5) rotate(-90)" textLength="392" lengthAdjust="spacingAndGlyphs">någon som helst form medgives icke utan skriftligt samtycke fr ån Atlet AB.</text>
<text transform="translate(713.3,1110.5) rotate(-90)" textLength="446" lengthAdjust="spacingAndGlyphs">All rights strictly reserved. Reproduction or issue to third parties in any form whatever</text>
<text transform="translate(726,1110.5) rotate(-90)" textLength="284" lengthAdjust="spacingAndGlyphs">is not permitted without written authority from Atlet AB.</text>
</g>
<!-- diagram -->
<g fill="none" stroke="#1a1a1a" stroke-width="1.5">
<!-- dashed valve housing -->
<path d="M1105 684.4H1561M1561 1306.3H1105" stroke-width="1.7" stroke-dasharray="39 4.3 10.5 4.3 10.5 4.3" stroke-dashoffset="11.3"/>
<path d="M1105 683.6V1306.3M1561 683.6V1306.3" stroke-width="1.7" stroke-dasharray="55.3 5.2 14.5 4.5 14.5 5" stroke-dashoffset="11.5"/>
<!-- outer line to pressure guard -->
<path d="M1011 1107H1050.5V609.5H1295.2V567"/>
<path d="M1240.2 609.5V807.6"/>
<path d="M1132.5 1001V807.6H1254M1291 807.6H1340.4M1367.2 807.6H1433.4V966M1433.4 1001.5V1173M1433.4 1220V1240"/>
<path d="M1105 1001H1176.5M1192 1001H1254.5M1289.5 1001H1376.8V1172M1376.8 1219.3V1239.2"/>
<path d="M1227.2 1001V1100.4H1270.4M1297.2 1100.4H1433.5"/>
<!-- pressure guard -->
<rect x="1281.8" y="532.3" width="26" height="35"/>
<path d="M1281.8 532.3L1307.8 567"/>
<path d="M1295.2 561l-3.5 6h7z" fill="#1a1a1a"/>
<path d="M1288 532l14-4-12-5 12-5-12-5 13-3" stroke-width="1.3"/>
<path d="M1305 532L1277 508" stroke-width="1.3"/>
<path d="M1276 507l6 1.5-3.5 3.5z" fill="#1a1a1a"/>
<path d="M1293 539.5l9-3.5M1293 539.5l9 3.5" stroke-width="1.2"/>
<circle cx="1293" cy="539.5" r="1.6" fill="#1a1a1a"/><circle cx="1302" cy="536" r="1.6" fill="#1a1a1a"/><circle cx="1302" cy="543" r="1.6" fill="#1a1a1a"/>
<!-- nodes -->
<circle cx="1240.2" cy="609.5" r="3" fill="#1a1a1a"/>
<ellipse cx="1240.2" cy="684.4" rx="4.2" ry="4.8" fill="#111" stroke="none"/><circle cx="1240.2" cy="684.4" r="1.2" fill="#fff" stroke="none"/>
<circle cx="1240.2" cy="807.6" r="3" fill="#1a1a1a"/>
<circle cx="1132.5" cy="1001" r="2.6" fill="#fff" stroke-width="2.4"/>
<circle cx="1227.2" cy="1001" r="3.2" fill="#1a1a1a"/>
<circle cx="1433.5" cy="1100.4" r="3.2" fill="#1a1a1a"/>
<circle cx="1258" cy="1100.4" r="1.6" fill="#1a1a1a"/>
<!-- filter top -->
<path d="M1272.8 783L1291 807.6 1272.8 831 1254.5 807.6Z"/>
<path d="M1272.8 787V829" stroke-dasharray="5 4" stroke-width="1.3"/>
<!-- solenoid valve -->
<path d="M1340.4 755H1367.2V825.2H1340.4ZM1353.6 755V729.3H1367.2V755M1353.6 734L1367.2 743M1340.4 773H1365M1340.4 790H1367.2"/>
<path d="M1366 773l-5-2.5v5z" fill="#1a1a1a"/>
<path d="M1354.5 801.6L1358.5 807.6 1354.5 813.6 1350.5 807.6Z" fill="#fff"/>
<path d="M1366 825.2L1344 833.5 1364 842 1344 850.5H1364"/>
<!-- X / M -->
<path d="M1095 988L1116 1014M1095 1014L1116 988" stroke-width="2"/>
<!-- check valve -->
<path d="M1166 992.5V1010M1166.2 993L1169.5 1007M1169.8 1010V999M1170.5 1008L1174.3 992.5" stroke-width="1.7"/>
<circle cx="1182.7" cy="1001" r="6.1" fill="#fff" stroke-width="1.8"/>
<path d="M1183.5 989.5L1192 1001 1183.5 1012.5" stroke-width="1.8"/>
<!-- pump + motor -->
<ellipse cx="1271.9" cy="1001" rx="17.5" ry="23"/>
<path d="M1255 1001l10-6v12z" fill="#1a1a1a"/>
<ellipse cx="1271.9" cy="908" rx="17" ry="21.5"/>
<path d="M1268.5 930V978M1275.5 930V978" stroke-width="1.3"/>
<path d="M1263 952H1281M1263 958H1281" stroke-width="1.6"/>
<!-- relief valve -->
<rect x="1270.4" y="1083.2" width="26.8" height="35"/>
<path d="M1271 1092H1294"/>
<path d="M1295 1092l-5-2.5v5z" fill="#1a1a1a"/>
<path d="M1258 1100V1068Q1258 1065.4 1261 1065.4H1281Q1284.1 1065.4 1284.1 1068V1083" stroke-dasharray="5 4" stroke-width="1.4"/>
<path d="M1279 1122l9 3-9 4 9 3-9 4 9 3-9 4 9 2" stroke-width="1.2"/>
<path d="M1266 1147L1298 1122" stroke-width="1.3"/>
<path d="M1265 1148l6-1.5-2.5-3z" fill="#1a1a1a"/>
<!-- right box -->
<rect x="1420" y="966" width="26.7" height="35.5"/>
<path d="M1429 970L1438 986M1438 970L1429 986M1427 985.5H1440M1433.4 986V1001" stroke-width="1.3"/>
<path d="M1433.4 998l-2-5h4z" fill="#1a1a1a"/>
<!-- bottom filters -->
<path d="M1376.7 1172L1395.2 1195.7 1376.7 1219.3 1358.2 1195.7Z"/>
<path d="M1360 1195.7H1393" stroke-dasharray="6 4" stroke-width="1.3"/>
<path d="M1433.3 1173L1451.8 1196.7 1433.3 1220 1414.8 1196.7Z"/>
<path d="M1416.5 1196.7H1450" stroke-dasharray="6 4" stroke-width="1.3"/>
<path d="M1489.7 1174L1508.2 1197.4 1489.7 1221.4 1471.2 1197.4Z"/>
<path d="M1471.2 1197.4H1508.2" stroke-width="1.7"/>
<path d="M1487.5 1174V1162M1492 1174V1162" stroke-width="1.3"/>
<path d="M1481.5 1163.5Q1482 1157 1489.7 1157 1497.5 1157 1497.5 1163.5" stroke-width="1.3"/>
<path d="M1346.2 1240V1275H1532.5V1236.2" stroke-width="1.7"/>
<!-- cylinder -->
<rect x="945.7" y="1029.3" width="32.7" height="85.8"/>
<path d="M945.7 1072.9H978.4M945.7 1081.5H978.4" stroke-width="1.7"/>
<path d="M958.9 1003.5V1072.9M964.8 1003.5V1072.9" stroke-width="1.3"/>
<path d="M978.4 1107H985M985 1107Q985 1123.7 998 1123.7 1011 1123.7 1011 1107"/>
<circle cx="985" cy="1107" r="1.8" fill="#1a1a1a"/><circle cx="1011" cy="1107" r="1.8" fill="#1a1a1a"/>
</g>
<g fill="#1a1a1a" font-size="13">
<text x="1321.5" y="555.2" textLength="77" lengthAdjust="spacingAndGlyphs">Pressure guard</text>
<text x="1482.3" y="675.7" textLength="69" lengthAdjust="spacingAndGlyphs">Valve housing</text>
<text x="927.2" y="981" textLength="80.6" lengthAdjust="spacingAndGlyphs">Lifting/Lowering</text>
<text x="1250.5" y="670" font-size="36" textLength="14.3" lengthAdjust="spacingAndGlyphs">A</text>
<text x="1071" y="994" font-size="35" textLength="15" lengthAdjust="spacingAndGlyphs">M</text>
<text x="1266" y="913.5" font-size="12" font-weight="bold" textLength="10" lengthAdjust="spacingAndGlyphs">Σ</text>
</g>
</svg>


<!-- right scrollbar -->
<div class="a" style="left:1720px;top:110px;width:7.5px;height:1313px;background:#555"></div>
<div class="a hatch" style="left:1727px;top:110px;width:21px;height:1313px"></div>
<div class="a" style="left:1747px;top:110px;width:1px;height:1313px;background:#c4c4c4"></div>
<svg class="a" style="left:1720px;top:100px" width="28" height="1338" viewBox="1720 100 28 1338">
<g>
<rect x="1727" y="110.5" width="19" height="19" fill="#c4c4c4"/>
<path d="M1727.5 129V111h18" stroke="#fff" stroke-width="1.6" fill="none"/>
<path d="M1727 129.3h18.8V110.5" stroke="#111" stroke-width="1.6" fill="none"/>
<path d="M1732 122.5h9l-4.5-5z" fill="#000"/>
<rect x="1728" y="522" width="18" height="34" fill="#c2c2c2"/>
<path d="M1728.5 555V522.8h17" stroke="#fff" stroke-width="1.6" fill="none"/>
<path d="M1728 555.3h17.8V522" stroke="#111" stroke-width="1.6" fill="none"/>
<rect x="1729" y="1405" width="17" height="18" fill="#c4c4c4"/>
<path d="M1729.5 1422V1405.5h16" stroke="#fff" stroke-width="1.6" fill="none"/>
<path d="M1729 1422.5h17V1405" stroke="#111" stroke-width="1.6" fill="none"/>
<path d="M1733 1411.5h9l-4.5 5z" fill="#000"/>
<rect x="1727" y="1423" width="21" height="15" fill="#c8c8c8"/>
<path d="M1727 1438V1423.8h19" stroke="#111" stroke-width="1.4" fill="none"/>
</g>
</svg>
<!-- bottom status / h-scroll -->
<div class="a" style="left:577px;top:1423px;width:9px;height:15px;background:#555"></div>
<div class="a hatch" style="left:821px;top:1423px;width:906px;height:15px"></div>
<div class="a" style="left:585.5px;top:1423.5px;width:236px;height:15px;background:linear-gradient(#e8e8e8,#d8d8d8);border-top:1.5px solid #f4f4f4;border-left:1.5px solid #f4f4f4"></div>
<div class="a" style="left:615px;top:1424px;width:200px;height:14px;overflow:hidden"><div style="font-size:18.5px;line-height:22px;color:#111;white-space:nowrap;margin-top:1.8px">20,988 x 29,700 см</div></div>
<svg class="a" style="left:800px;top:1420px" width="28" height="18" viewBox="800 1420 28 18">
<rect x="805.5" y="1424" width="15" height="14" fill="#cfcfcf" stroke="#eee" stroke-width="1"/>
<path d="M816 1427l-5 4 5 4z" fill="#777"/>
<path d="M821.5 1423V1438" stroke="#111" stroke-width="1.6"/>
</svg>
<svg class="a" style="left:1705px;top:1420px" width="22" height="18" viewBox="1705 1420 22 18">
<rect x="1710" y="1424.5" width="16" height="14" fill="#cfcfcf" stroke="#eee" stroke-width="1"/>
<path d="M1716 1428l5 4-5 4z" fill="#888"/>
</svg>
<div class="a" style="left:1746px;top:0;width:2px;height:110px;background:#cfcfcf"></div>
<!-- title icon + cursor -->
<svg class="a" style="left:0;top:0" width="40" height="40" viewBox="0 0 40 40">
<path d="M8 2h14l3.5 3.5V24H8z" fill="#fafafa" stroke="#ddd" stroke-width="0.8"/>
<path d="M7 5.5c4-1.5 9-1.5 10 1s-1 6-2 9-2 3-3 3M12 17c4-.5 8-.5 12 1" fill="none" stroke="#d81c1c" stroke-width="3"/>
<path d="M20.5 8h3" stroke="#888" stroke-width="1.2"/>
<path d="M1.2 1.5V23.5L6.3 18.5 11.5 29.8 15.6 27.8 10.8 16.8H16.6Z" fill="#fff" stroke="#000" stroke-width="1.5" stroke-linejoin="miter"/>
</svg>

</body></html>
